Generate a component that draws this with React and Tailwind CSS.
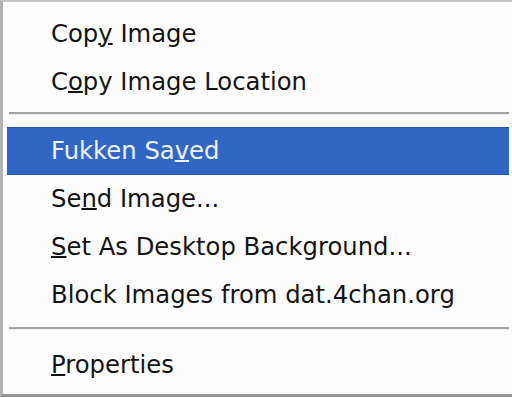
const items = [
  { label: <>Cop<u>y</u> Image</> },
  { label: <>C<u>o</u>py Image Location</> },
  { sep: true, box: 'h-[21px] pt-[6px]' },
  { label: <>Fukken Sa<u>v</u>ed</>, active: true },
  { label: <>Se<u>n</u>d Image...</> },
  { label: <><u>S</u>et As Desktop Background...</> },
  { label: <>Block Images from dat.4chan.org</> },
  { sep: true, box: 'h-[22px] pt-[8px]' },
  { label: <><u>P</u>roperties</> },
]

const App = () => {
  return (
    <div
      className="w-[512px] h-[397px] bg-[#fdfdfd] border-l-[3px] border-t-2 border-b-[3px] border-l-[#b3b3b3] border-t-[#c6c6c6] border-b-[#969696] pt-[8px] pl-[4px] pr-[3px] overflow-hidden"
      style={{ fontFamily: '"DejaVu Sans", Verdana, sans-serif' }}
    >
      {items.map((item, i) =>
        item.sep ? (
          <div key={i} className={item.box}>
            <div className="ml-[2px] h-[2px] bg-[#a3a3a3]" />
            <div className="ml-[2px] h-px bg-[#ededed]" />
          </div>
        ) : (
          <div
            key={i}
            className={
              item.active
                ? 'h-12 flex items-center pl-[44px] text-[24.3px] text-[#eef3ff] bg-[#3066c4] border-y border-[#2a56a8] [&_u]:decoration-[1.5px]'
                : 'h-12 flex items-center pl-[44px] text-[24.3px] text-[#141414] [&_u]:decoration-[1.5px]'
            }
          >
            <span className="whitespace-nowrap leading-none">{item.label}</span>
          </div>
        )
      )}
    </div>
  )
}

export default App
